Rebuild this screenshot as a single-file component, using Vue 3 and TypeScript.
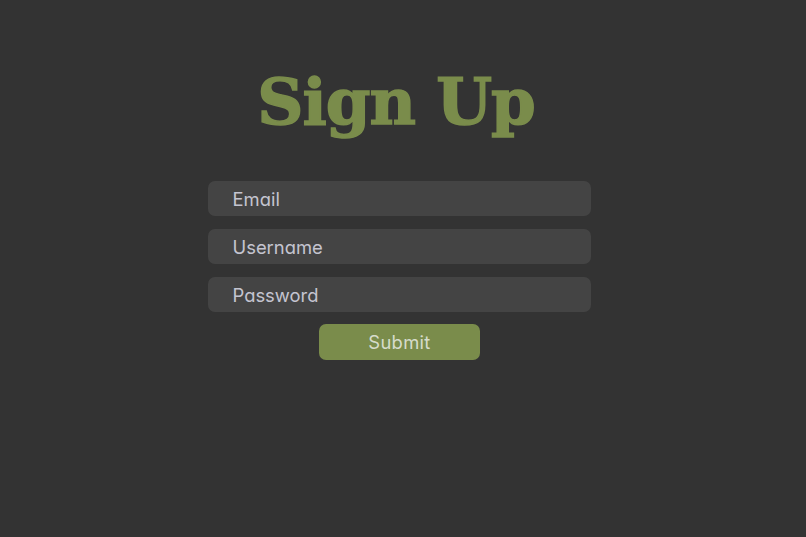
<script setup lang="ts">
const fields: { name: string; type: string; placeholder: string }[] = [
  { name: 'email', type: 'email', placeholder: 'Email' },
  { name: 'username', type: 'text', placeholder: 'Username' },
  { name: 'password', type: 'password', placeholder: 'Password' },
]
</script>

<template>
  <main class="page">
    <h1 class="title">Sign Up</h1>
    <form class="form" @submit.prevent>
      <input
        v-for="f in fields"
        :key="f.name"
        class="field"
        :type="f.type"
        :name="f.name"
        :placeholder="f.placeholder"
      />
      <button class="submit" type="submit">Submit</button>
    </form>
  </main>
</template>

<style>
html, body { margin: 0; background: #333333; }
</style>

<style scoped>
.page {
  box-sizing: border-box;
  width: 806px;
  height: 537px;
  background: #333333;
  display: flex;
  flex-direction: column;
  align-items: center;
  padding: 62px 7px 0 0;
  font-family: Inter, "Noto Sans", sans-serif;
  font-feature-settings: "cv11" 1;
}
.title {
  margin: 0 7px 40px 0;
  height: 79px;
  line-height: 79px;
  font-family: "DejaVu Serif", serif;
  font-size: 64px;
  font-weight: 700;
  letter-spacing: -1px;
  -webkit-text-stroke: 1.5px #7a8c4b;
  color: #7a8c4b;
  white-space: nowrap;
}
.form {
  width: 383px;
  display: flex;
  flex-direction: column;
  align-items: center;
  gap: 12.6px;
}
.field {
  box-sizing: border-box;
  width: 100%;
  height: 35.2px;
  padding: 1px 24.5px 0;
  border: none;
  border-radius: 7px;
  background: #444444;
  font-family: inherit;
  font-feature-settings: inherit;
  font-size: 18.4px;
  font-weight: 400;
  color: #c4c4d0;
  outline: none;
}
.field::placeholder { color: #c4c4d0; opacity: 1; }
.submit {
  width: 161.5px;
  height: 36px;
  padding: 0;
  border: none;
  border-radius: 7px;
  background: #7a8c4b;
  font-family: inherit;
  font-feature-settings: inherit;
  font-size: 18.4px;
  font-weight: 400;
  letter-spacing: 0.3px;
  color: #d6dccb;
}
</style>
